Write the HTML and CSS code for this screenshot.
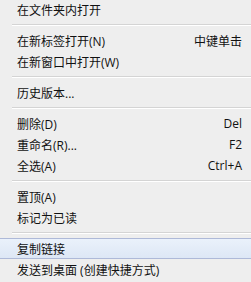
FILE: index.html
```html
<!DOCTYPE html>
<html>
<head>
<meta charset="utf-8">
<link rel="stylesheet" href="styles.css">
</head>
<body>
<div class="menu">
  <div class="item"><span class="label">在文件夹内打开</span></div>
  <div class="sep"></div>
  <div class="item"><span class="label">在新标签打开(N)</span><span class="key">中键单击</span></div>
  <div class="item"><span class="label">在新窗口中打开(W)</span></div>
  <div class="sep"></div>
  <div class="item"><span class="label">历史版本...</span></div>
  <div class="sep"></div>
  <div class="item"><span class="label">删除(D)</span><span class="key">Del</span></div>
  <div class="item"><span class="label">重命名(R)...</span><span class="key">F2</span></div>
  <div class="item"><span class="label">全选(A)</span><span class="key">Ctrl+A</span></div>
  <div class="sep"></div>
  <div class="item"><span class="label">置顶(A)</span></div>
  <div class="item"><span class="label">标记为已读</span></div>
  <div class="sep"></div>
  <div class="item active"><span class="label">复制链接</span></div>
  <div class="item"><span class="label">发送到桌面 (创建快捷方式)</span></div>
</div>
</body>
</html>
```
FILE: styles.css
```css
html, body {
  margin: 0;
  padding: 0;
  background: #eeeeee;
}
.menu {
  width: 251px;
  height: 282px;
  overflow: hidden;
  margin-top: -1px;
  display: flex;
  flex-direction: column;
  font-family: "Open Sans", "Noto Sans CJK SC", sans-serif;
  font-size: 12px;
  color: #111;
}
.item {
  height: 21px;
  flex: none;
  display: flex;
  align-items: center;
  justify-content: space-between;
  padding: 0 9px 0 17px;
  box-sizing: border-box;
  white-space: nowrap;
}
.item.active {
  background: linear-gradient(#eaf1fb, #dde7f5);
  border-top: 1px solid #aeb9d8;
  border-bottom: 1px solid #aeb9d8;
}
.sep {
  height: 10px;
  flex: none;
  margin-left: 12px;
  display: flex;
  flex-direction: column;
  justify-content: center;
}
.sep::before {
  content: "";
  display: block;
  height: 1px;
  background: #d4d4d4;
}
.sep::after {
  content: "";
  display: block;
  height: 1px;
  background: #ffffff;
}
```
